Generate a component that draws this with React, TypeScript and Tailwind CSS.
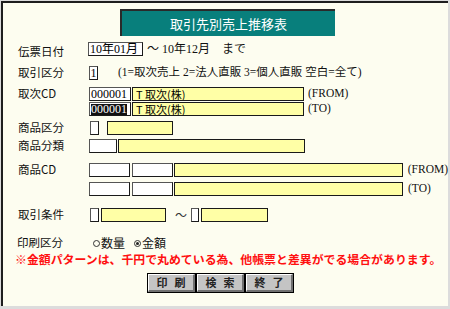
import React from "react";

const jp = { fontFamily: "'Noto Sans CJK JP', sans-serif" };
const serif = { fontFamily: "'Liberation Serif', 'Noto Sans CJK JP', serif" };

function Box({ w, children, cls = "" }: { w: string; children?: React.ReactNode; cls?: string }) {
  return (
    <div
      className={`${w} h-full border border-[#1a1a1a] border-l-[#555] border-t-[#555] bg-white flex items-center overflow-hidden text-[12px] leading-none text-black ${cls}`}
      style={serif}
    >
      {children}
    </div>
  );
}

function Yellow({ w, children }: { w: string; children?: React.ReactNode }) {
  return (
    <div
      className={`${w} h-full border border-[#1a1a1a] bg-[#ffffa6] flex items-center overflow-hidden text-[11px] leading-none text-black pl-[3px]`}
      style={jp}
    >
      {children}
    </div>
  );
}

function Label({ children }: { children: React.ReactNode }) {
  return (
    <div className="w-[71px] shrink-0 text-[11.5px] leading-none text-[#111]" style={jp}>
      {children}
    </div>
  );
}

function Radio({ on }: { on?: boolean }) {
  return (
    <span className="inline-flex w-[7px] h-[7px] rounded-full border border-[#333] items-center justify-center mr-[1px]">
      {on && <span className="w-[3px] h-[3px] rounded-full bg-[#222]" />}
    </span>
  );
}

function Btn({ children }: { children: React.ReactNode }) {
  return (
    <div className="h-full w-[49px] border border-black flex">
      <div
        className="flex-1 bg-[#c4c4c4] border-t border-l border-white border-r-2 border-b-2 border-r-[#707070] border-b-[#707070] flex items-center justify-center text-[11px] font-bold text-[#222] tracking-[7px] pl-[7px]"
        style={jp}
      >
        {children}
      </div>
    </div>
  );
}

export default function App() {
  return (
    <div className="w-[450px] h-[309px] bg-[#dcdcdc] overflow-hidden">
      <div className="w-[447px] h-[305px] ml-[1px] mt-[1px] border-l-2 border-t-2 border-[#1e1e1e] bg-[#fdfdf0] flex flex-col pl-[15px]">
        {/* Title */}
        <div className="mt-[6px] ml-[102px] w-[215px] h-[27px] bg-[#087f7c] border-l-2 border-t-2 border-[#2a2a2a] flex items-center justify-center text-white text-[13px] leading-none" style={jp}>
          取引先別売上推移表
        </div>

        {/* 伝票日付 */}
        <div className="mt-[6px] h-[14px] flex items-center">
          <Label><span className="relative top-[3px]">伝票日付</span></Label>
          <Box w="w-[55px] -ml-[1px]" cls="pl-[1px]">10年01月</Box>
          <div className="ml-[4px] text-[12px] leading-none text-[#111] whitespace-pre" style={serif}>～ 10年12月　まで</div>
        </div>

        {/* 取引区分 */}
        <div className="mt-[10px] h-[14px] flex items-center">
          <Label>取引区分</Label>
          <Box w="w-[9px]" cls="justify-center">1</Box>
          <div className="ml-[20px] text-[11.5px] leading-none text-[#111] whitespace-pre" style={serif}>(1=取次売上 2=法人直販 3=個人直販 空白=全て)</div>
        </div>

        {/* 取次CD */}
        <div className="mt-[7px] h-[14px] flex items-center">
          <Label>取次CD</Label>
          <Box w="w-[42px]" cls="pl-[1px]"><span className="text-black">000001</span></Box>
          <div className="ml-[1px] h-full flex"><Yellow w="w-[172px]">T 取次(株)</Yellow></div>
          <div className="ml-[4px] text-[11.5px] leading-none text-[#111]" style={serif}>(FROM)</div>
        </div>
        <div className="mt-[1px] h-[14px] flex items-center">
          <Label>{""}</Label>
          <Box w="w-[42px]" cls="pl-[1px]"><span className="bg-[#111] text-white leading-[11px]">000001</span></Box>
          <div className="ml-[1px] h-full flex"><Yellow w="w-[172px]">T 取次(株)</Yellow></div>
          <div className="ml-[4px] text-[11.5px] leading-none text-[#111]" style={serif}>(TO)</div>
        </div>

        {/* 商品区分 */}
        <div className="mt-[5px] h-[14px] flex items-center">
          <Label>商品区分</Label>
          <Box w="w-[9px] ml-[1px]" />
          <div className="ml-[8px] h-full flex"><Yellow w="w-[66px]" /></div>
        </div>

        {/* 商品分類 */}
        <div className="mt-[4px] h-[14px] flex items-center">
          <Label>商品分類</Label>
          <Box w="w-[28px]" />
          <div className="ml-[1px] h-full flex"><Yellow w="w-[187px]" /></div>
        </div>

        {/* 商品CD */}
        <div className="mt-[10px] h-[14px] flex items-center">
          <Label>商品CD</Label>
          <Box w="w-[41px]" />
          <div className="ml-[2px] h-full flex"><Box w="w-[41px]" /></div>
          <div className="ml-[1px] h-full flex"><Yellow w="w-[229px]" /></div>
          <div className="ml-[5px] text-[11.5px] leading-none text-[#111]" style={serif}>(FROM)</div>
        </div>
        <div className="mt-[5px] h-[14px] flex items-center">
          <Label>{""}</Label>
          <Box w="w-[41px]" />
          <div className="ml-[2px] h-full flex"><Box w="w-[41px]" /></div>
          <div className="ml-[1px] h-full flex"><Yellow w="w-[229px]" /></div>
          <div className="ml-[5px] text-[11.5px] leading-none text-[#111]" style={serif}>(TO)</div>
        </div>

        {/* 取引条件 */}
        <div className="mt-[12px] h-[14px] flex items-center">
          <Label>取引条件</Label>
          <Box w="w-[9px] ml-[1px]" />
          <div className="ml-[2px] h-full flex"><Yellow w="w-[65px]" /></div>
          <div className="ml-[9px] text-[12px] leading-none text-[#333]" style={jp}>～</div>
          <div className="ml-[4px] h-full flex"><Box w="w-[8px]" /></div>
          <div className="ml-[2px] h-full flex"><Yellow w="w-[67px]" /></div>
        </div>

        {/* 印刷区分 */}
        <div className="mt-[14px] h-[14px] flex items-center">
          <Label><span className="relative left-[-1px]">印刷区分</span></Label>
          <div className="ml-[4px] flex items-center text-[12px] leading-none text-[#111]" style={jp}>
            <Radio />数量
            <span className="ml-[9px] inline-flex items-center"><Radio on />金額</span>
          </div>
        </div>

        {/* red note */}
        <div className="mt-[2px] h-[14px] flex items-center -ml-[3px] text-[11.9px] leading-none font-bold text-[#ff1010] whitespace-nowrap" style={jp}>
          ※金額パターンは、千円で丸めている為、他帳票と差異がでる場合があります。
        </div>

        {/* buttons */}
        <div className="mt-[7px] h-[20px] flex ml-[129px]">
          <Btn>印刷</Btn>
          <Btn>検索</Btn>
          <Btn>終了</Btn>
        </div>
      </div>
    </div>
  );
}
